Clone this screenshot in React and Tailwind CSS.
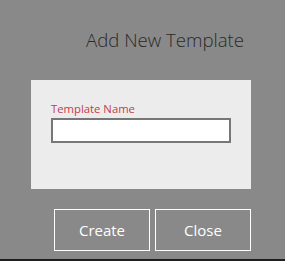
import React from "react";

export default function App() {
  return (
    <div className="w-[285px] h-[261px] bg-[#898989] flex flex-col font-['Open_Sans',sans-serif]">
      {/* Title */}
      <div className="h-[80px] flex items-start justify-end pr-[41px] pt-[28px]">
        <h1 className="text-[18.6px] font-light leading-[24px] text-[#2a2a2a]">Add New Template</h1>
      </div>

      {/* Form card */}
      <div className="ml-[31px] w-[220px] h-[109px] bg-[#ececec] pl-[20px] pt-[21px]">
        <label className="block text-[11.3px] leading-[16px] text-[#c8394c]">Template Name</label>
        <input
          type="text"
          className="mt-[1px] block w-[180px] h-[25px] bg-white border-2 border-[#777777] outline-none"
        />
      </div>

      {/* Actions */}
      <div className="flex gap-[5px] ml-[54px] mt-[20px]">
        <button className="w-[96px] h-[42px] border border-white text-white text-[15px]">Create</button>
        <button className="w-[96px] h-[42px] border border-white text-white text-[15px]">Close</button>
      </div>

      <div className="mt-auto h-[2px] bg-[#1e1e1e]" />
    </div>
  );
}
